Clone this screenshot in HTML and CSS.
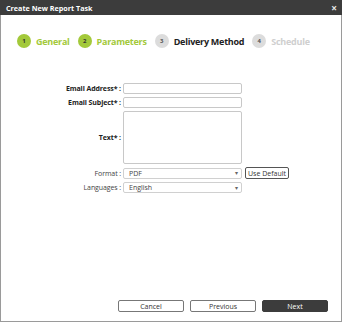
FILE: index.html
```html
<!DOCTYPE html>
<html lang="en">
<head>
  <meta charset="UTF-8" />
  <title>Create New Report Task</title>
  <link rel="stylesheet" href="styles.css">
</head>
<body>
  <div class="dialog">
    <div class="titlebar">
      <span>Create New Report Task</span>
      <span class="close">&times;</span>
    </div>

    <div class="steps">
      <div class="step done"><span class="num">1</span><span class="name">General</span></div>
      <div class="step done"><span class="num">2</span><span class="name">Parameters</span></div>
      <div class="step current"><span class="num">3</span><span class="name">Delivery Method</span></div>
      <div class="step todo"><span class="num">4</span><span class="name">Schedule</span></div>
    </div>

    <div class="form">
      <label class="req">Email Address* :</label>
      <input type="text" class="field" />
      <span></span>

      <label class="req">Email Subject* :</label>
      <input type="text" class="field" />
      <span></span>

      <label class="req text-label">Text* :</label>
      <textarea class="field area"></textarea>
      <span></span>

      <label class="opt">Format :</label>
      <div class="select"><span>PDF</span><span class="arrow">&#9662;</span></div>
      <button class="small">Use Default</button>

      <label class="opt">Languages :</label>
      <div class="select"><span>English</span><span class="arrow">&#9662;</span></div>
      <span></span>
    </div>

    <div class="actions">
      <button class="btn">Cancel</button>
      <button class="btn">Previous</button>
      <button class="btn primary">Next</button>
    </div>
  </div>
</body>
</html>
```

FILE: styles.css
```css
body {
  margin: 0;
  font-family: 'Open Sans', 'Noto Sans', sans-serif;
  background: #fff;
}
.dialog {
  width: 342px;
  height: 322px;
  box-sizing: border-box;
  border: 1px solid #9a9a9a;
  border-top: none;
  display: flex;
  flex-direction: column;
}
.titlebar {
  height: 15px;
  background: #3c3c3c;
  color: #fff;
  font-size: 7.2px;
  font-weight: 700;
  display: flex;
  align-items: center;
  justify-content: space-between;
  padding: 0 5px 0 6px;
  margin: 0 -1px;
}
.close { font-size: 10px; line-height: 1; color: #e8e8e8; }

.steps {
  display: flex;
  align-items: center;
  margin-top: 19px;
  padding-left: 16px;
  height: 14px;
  white-space: nowrap;
}
.step { display: flex; align-items: center; margin-right: 8px; }
.num {
  width: 14px;
  height: 14px;
  border-radius: 50%;
  font-size: 6px;
  font-weight: 700;
  display: flex;
  align-items: center;
  justify-content: center;
  margin-right: 5px;
  flex: none;
}
.name { font-size: 9px; font-weight: 700; letter-spacing: -0.25px; }
.done .num { background: #a3c93a; color: #333; }
.done .name { color: #a3c93a; }
.current .num, .todo .num { background: #dcdcdc; color: #555; }
.current .name { color: #222; }
.todo .name { color: #cfcfcf; }

.form {
  display: grid;
  grid-template-columns: 120px 119px auto;
  column-gap: 2px;
  row-gap: 3px;
  margin-top: 35px;
  align-items: center;
  justify-items: start;
}
.form label {
  justify-self: end;
  font-size: 7px;
  letter-spacing: -0.1px;
}
.req { font-weight: 700; color: #222; }
.opt { color: #444; }
.text-label { align-self: start; margin-top: 22px; }
.field {
  width: 119px;
  height: 11px;
  box-sizing: border-box;
  border: 1px solid #c8c8c8;
  border-radius: 2px;
  margin: 0;
  padding: 0;
}
.area { height: 53px; resize: none; }
.select {
  width: 119px;
  height: 11px;
  box-sizing: border-box;
  border: 1px solid #d0d0d0;
  border-radius: 2px;
  display: flex;
  align-items: center;
  justify-content: space-between;
  padding: 0 3px 0 5px;
  font-size: 7px;
  color: #444;
}
.arrow { font-size: 6px; color: #666; }
.small {
  margin: 0 0 0 1px;
  height: 12px;
  padding: 0 2px;
  font-family: inherit;
  font-size: 7px;
  color: #333;
  background: #fff;
  border: 1px solid #555;
  border-radius: 2px;
}
.actions {
  margin-top: auto;
  margin-bottom: 9px;
  display: flex;
  justify-content: flex-end;
  gap: 6px;
  padding-right: 13px;
}
.btn {
  width: 66px;
  height: 12px;
  padding: 0;
  font-family: inherit;
  font-size: 7px;
  color: #333;
  background: #fff;
  border: 1px solid #777;
  border-radius: 2px;
}
.btn.primary {
  background: #3c3c3c;
  border-color: #3c3c3c;
  color: #fff;
}
```
